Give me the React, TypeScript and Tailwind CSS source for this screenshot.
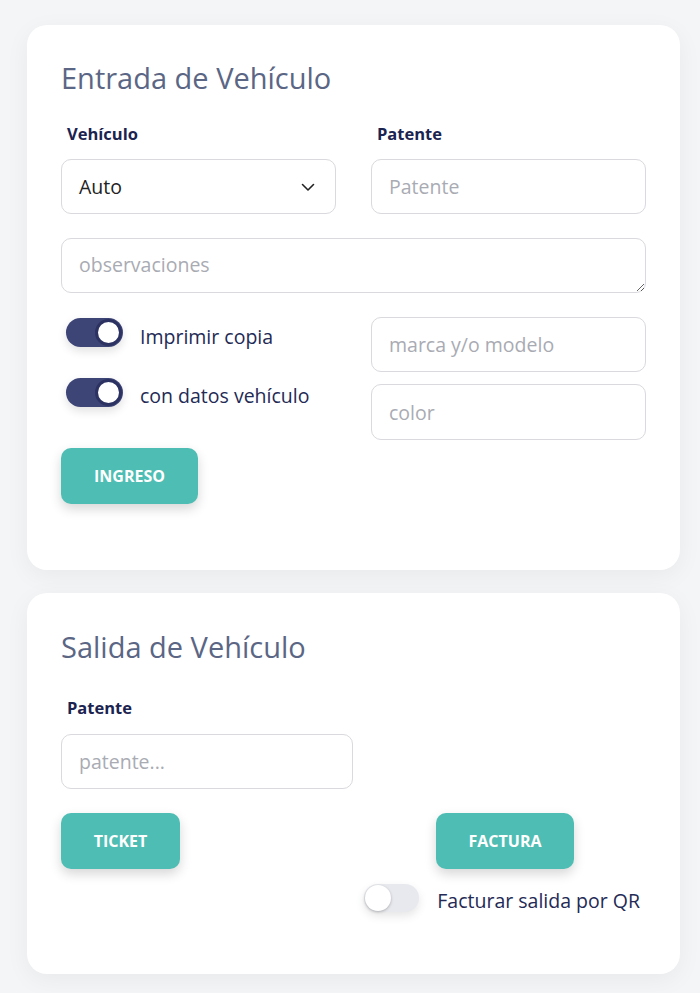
import React from 'react';

const Toggle: React.FC<{ on?: boolean }> = ({ on }) =>
  on ? (
    <span className="relative inline-block w-[57px] h-[29px] rounded-full bg-[#3d4476] shadow-[0_4px_10px_rgba(0,0,0,0.12)] flex-shrink-0">
      <span className="absolute right-[1px] top-[1px] w-[27px] h-[27px] rounded-full bg-white border-[3px] border-[#2c3262]"></span>
    </span>
  ) : (
    <span className="relative inline-block w-[55px] h-[28px] rounded-full bg-[#e8e9ee] shadow-[0_4px_10px_rgba(0,0,0,0.1)] flex-shrink-0">
      <span className="absolute left-[1px] top-[1px] w-[26px] h-[26px] rounded-full bg-white shadow-[0_1px_3px_rgba(0,0,0,0.25)]"></span>
    </span>
  );

const inputCls =
  'block h-[55px] rounded-[10px] border border-[#d9d9de] bg-white px-[17px] text-[19.5px] text-[#222] placeholder:text-[#a9abb3] outline-none';

const labelCls = 'block ml-[6px] text-[16.5px] leading-[22px] font-bold text-[#1b2350]';

const btnCls =
  'h-[56px] rounded-[10px] bg-[#4ebdb3] text-white text-[16px] font-bold uppercase shadow-[0_5px_12px_rgba(0,0,0,0.16)]';

export default function App() {
  return (
    <div
      className="min-h-[993px] bg-[#f4f5f7] pt-[25px] pl-[27px] pr-[20px] pb-[20px]"
      style={{ fontFamily: '"Open Sans", "Noto Sans", sans-serif' }}
    >
      {/* Entrada */}
      <section className="bg-white rounded-[20px] shadow-[0_6px_24px_rgba(0,0,0,0.05)] pt-[36px] pb-[66px] px-[34px]">
        <h2 className="text-[29px] leading-[34px] text-[#5b6685]">Entrada de Vehículo</h2>

        <div className="grid grid-cols-2 gap-x-[35px] mt-[28px]">
          <div>
            <label className={labelCls}>Vehículo</label>
            <div className="relative mt-[14px]">
              <div className={inputCls + ' w-full flex items-center'}>Auto</div>
              <svg className="absolute right-[21px] top-[21px]" width="14" height="14" viewBox="0 0 14 14" fill="none">
                <path d="M1.5 4.5L7 10L12.5 4.5" stroke="#222" strokeWidth="1.6" strokeLinecap="round" strokeLinejoin="round" />
              </svg>
            </div>
          </div>
          <div>
            <label className={labelCls}>Patente</label>
            <input className={inputCls + ' w-full mt-[14px]'} placeholder="Patente" />
          </div>
        </div>

        <textarea
          className="block w-full h-[55px] mt-[24px] rounded-[10px] border border-[#d9d9de] bg-white px-[17px] pt-[12px] text-[19.5px] leading-[27px] placeholder:text-[#a9abb3] outline-none resize-y"
          placeholder="observaciones"
        />

        <div className="grid grid-cols-2 gap-x-[35px] mt-[24px]">
          <div className="flex flex-col gap-[31px] pl-[5px] pt-[1px]">
            <div className="flex items-center gap-[17px] h-[29px]">
              <Toggle on />
              <span className="text-[19.5px] leading-[27px] text-[#232a55] mt-[7px]">Imprimir copia</span>
            </div>
            <div className="flex items-center gap-[17px] h-[29px]">
              <Toggle on />
              <span className="text-[19.5px] leading-[27px] text-[#232a55] mt-[6px]">con datos vehículo</span>
            </div>
          </div>
          <div className="flex flex-col gap-[12px]">
            <input className={inputCls + ' w-full'} placeholder="marca y/o modelo" />
            <input className={inputCls + ' w-full h-[56px]'} placeholder="color" />
          </div>
        </div>

        <button className={btnCls + ' w-[137px] mt-[8px]'}>Ingreso</button>
      </section>

      {/* Salida */}
      <section className="mt-[23px] bg-white rounded-[20px] shadow-[0_6px_24px_rgba(0,0,0,0.05)] pt-[37px] pb-[62px] px-[34px]">
        <h2 className="text-[29px] leading-[34px] text-[#5b6685]">Salida de Vehículo</h2>

        <label className={labelCls + ' mt-[33px]'}>Patente</label>
        <input className={inputCls + ' mt-[15px] w-[292px] h-[54px]'} placeholder="patente..." />

        <div className="flex mt-[24px]">
          <button className={btnCls + ' w-[119px] self-start'}>Ticket</button>
          <div className="ml-auto mr-[6px] flex flex-col items-end">
            <button className={btnCls + ' w-[138px] mr-[66px]'}>Factura</button>
            <div className="flex items-center gap-[18px] mt-[15px] h-[28px]">
              <Toggle />
              <span className="text-[19.5px] leading-[27px] text-[#232a55] mt-[4px]">Facturar salida por QR</span>
            </div>
          </div>
        </div>
      </section>
    </div>
  );
}
